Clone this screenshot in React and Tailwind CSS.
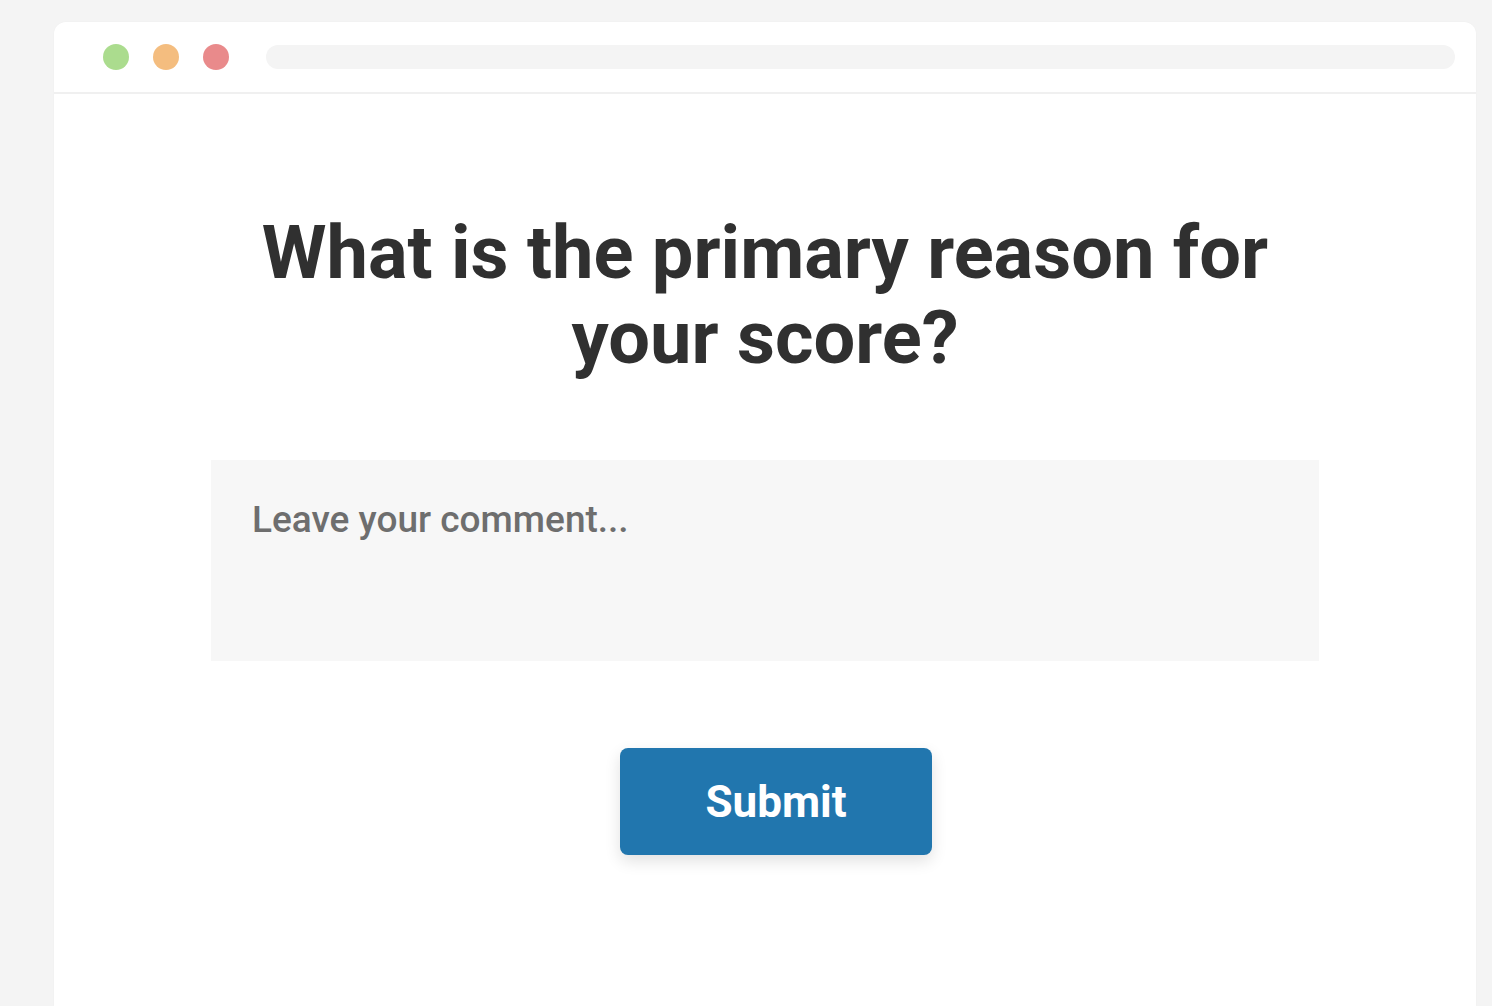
export default function App() {
  return (
    <div className="min-h-screen bg-[#f4f4f4] pt-[22px] pl-[54px] pr-[16px] font-['Roboto',sans-serif] overflow-hidden">
      <div className="bg-white rounded-t-[12px] min-h-[984px] shadow-[0_0_2px_rgba(0,0,0,0.03)]">
        {/* window bar */}
        <div className="h-[72px] flex items-center pl-[49px] pr-[21px] border-b-2 border-[#f0f0f0]">
          <div className="flex gap-[24px]">
            <span className="w-[26px] h-[26px] rounded-full bg-[#abdc8e]" />
            <span className="w-[26px] h-[26px] rounded-full bg-[#f4bd7f]" />
            <span className="w-[26px] h-[26px] rounded-full bg-[#e98a8b]" />
          </div>
          <div className="ml-[37px] flex-1 h-[24px] rounded-full bg-[#f4f4f4]" />
        </div>

        {/* survey */}
        <div className="flex flex-col items-center pt-[116px]">
          <h1 className="text-[74px] leading-[85px] font-bold text-[#303030] text-center w-[1100px]">
            What is the primary reason for your score?
          </h1>
          <textarea
            className="mt-[80px] w-[1108px] h-[201px] bg-[#f7f7f7] pt-[38px] pl-[41px] text-[37px] leading-[1.2] font-medium text-[#333] placeholder:text-[#6e6e6e] resize-none outline-none"
            placeholder="Leave your comment..."
          />
          <div className="mt-[87px] pl-[22px]">
            <button className="w-[312px] h-[107px] rounded-[8px] bg-[#2176ae] text-white text-[44px] font-bold shadow-[0_6px_16px_rgba(0,0,0,0.12)]">
              Submit
            </button>
          </div>
        </div>
      </div>
    </div>
  )
}
